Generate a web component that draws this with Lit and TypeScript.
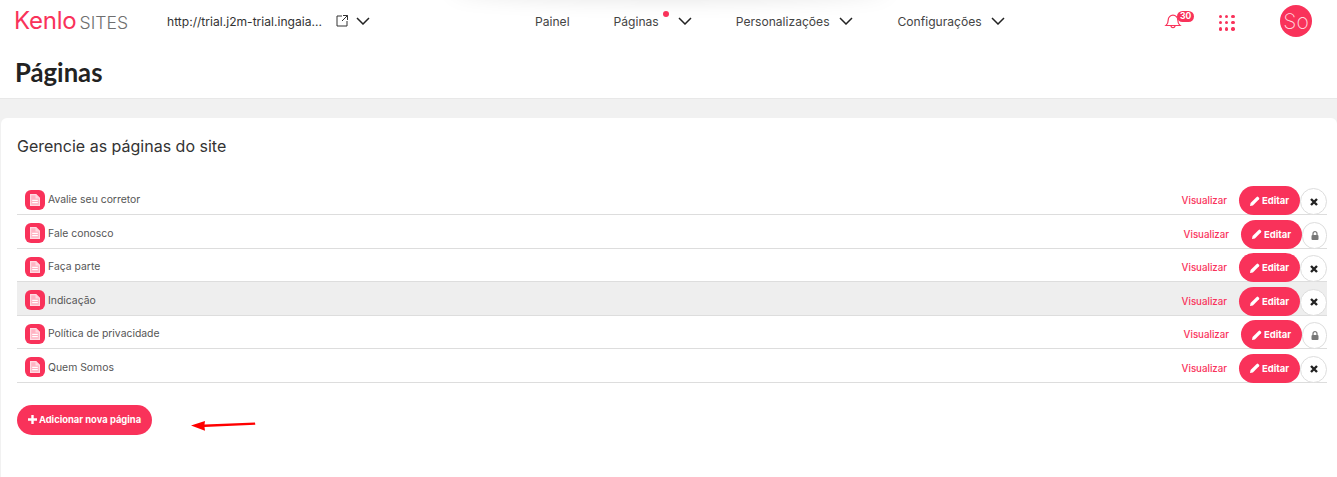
import { LitElement, html, css } from "lit";
import { customElement } from "lit/decorators.js";

const chevron = html`<svg class="chev" width="14" height="8" viewBox="0 0 14 8"><path d="M1 1l6 6 6-6" fill="none" stroke="#222" stroke-width="1.5"/></svg>`;
const docIcon = html`<svg width="10" height="12" viewBox="0 0 10 12"><path d="M.6.6h5.400l3.400 3.400v7.400h-8.800z" fill="#ffb3c3" stroke="#ffdbe2" stroke-width="1.200"/><path d="M5.500 1v3.500h3.500z" fill="#ffdbe2"/><rect x="2.200" y="5.800" width="5.600" height="1.200" fill="#fff"/><rect x="2.200" y="8" width="5.600" height="1.200" fill="#fff"/></svg>`;
const pencil = html`<svg width="10" height="10" viewBox="0 0 9 9"><path d="M0 9l.5-2.6L6 .9a1 1 0 0 1 1.400 0l.7.700a1 1 0 0 1 0 1.400L2.600 8.500z" fill="#fff"/></svg>`;
const cross = html`<svg width="8" height="8" viewBox="0 0 8 8"><path d="M1 1l6 6M7 1l-6 6" stroke="#222" stroke-width="2.400" fill="none"/></svg>`;
const lock = html`<svg width="8" height="9" viewBox="0 0 8 9"><path d="M2 4V2.700a2 2 0 0 1 4 0V4" fill="none" stroke="#777" stroke-width="1.200"/><rect x="0.500" y="4" width="7" height="5" rx="1" fill="#777"/></svg>`;

const pages: [string, boolean, boolean][] = [
  ["Avalie seu corretor", false, false],
  ["Fale conosco", true, false],
  ["Faça parte", false, false],
  ["Indicação", false, true],
  ["Política de privacidade", true, false],
  ["Quem Somos", false, false],
];

@customElement("app-root")
export class AppRoot extends LitElement {
  static styles = css`
    :host { display: block; position: relative; width: 1337px; height: 477px; overflow: hidden; background: #f1f1f1; font-family: Inter, "Liberation Sans", sans-serif; color: #333; }
    .header { background: #fff; height: 99px; box-sizing: border-box; border-bottom: 1px solid #e8e8e8; }
    .glow { position: absolute; left: 450px; top: -22px; width: 440px; height: 20px; box-shadow: 0 0 22px rgba(0,0,0,.13); border-radius: 50%; }
    .top { height: 42px; display: flex; align-items: center; position: relative; }
    .logo { width: 167px; padding-left: 14px; box-sizing: border-box; display: flex; align-items: baseline; white-space: nowrap; }
    .kenlo { color: #f9325a; font-size: 24px; font-weight: 400; letter-spacing: -.2px; line-height: 24px; }
    .sites { color: #6f6f6f; font-size: 17.600px; font-weight: 300; margin-left: 3px; }
    .url { font-size: 12.100px; color: #333; width: 169px; white-space: nowrap; }
    .urlchev { margin-left: 8px; display: flex; }
    .nav { display: flex; align-items: center; font-size: 12.100px; color: #444; margin-left: 165px; }
    .nav span { white-space: nowrap; }
    .item { display: flex; align-items: center; position: relative; }
    .item .chev { margin-left: 9px; }
    .item .far { margin-left: 19px; }
    .gap1 { margin-left: 44px; }
    .gap2 { margin-left: 45px; }
    .dot { position: absolute; width: 6px; height: 6px; background: #f9325a; border-radius: 50%; left: 49px; top: -3px; }
    .right { position: absolute; top: 0; left: 0; width: 100%; height: 44px; pointer-events: none; }
    .bell { position: absolute; left: 1164px; top: 13px; }
    .badge { position: absolute; left: 1177px; top: 11px; background: #f9325a; color: #fff; font-size: 8.500px; font-weight: 700; border-radius: 6px; width: 17px; height: 11px; line-height: 11px; text-align: center; }
    .grid { position: absolute; left: 1219px; top: 15px; display: grid; grid-template-columns: repeat(3, 3.400px); gap: 2.700px; }
    .grid i { width: 3.400px; height: 3.400px; background: #f9325a; border-radius: 50%; display: block; }
    .avatar { position: absolute; left: 1280px; top: 5px; width: 32px; height: 32px; border-radius: 50%; background: #f9325a; color: #ffd5dd; font-size: 21px; font-weight: 200; display: flex; align-items: center; justify-content: center; }
    h1 { margin: 0; padding: 14px 0 0 15px; font: 700 25.700px/32px Lato, sans-serif; color: #222; }
    .card { background: #fff; margin: 19px 0 0 1px; border-radius: 6px 6px 0 0; padding: 16px 10px 0 16px; height: 359px; box-sizing: border-box; }
    h2 { margin: 0; font: 400 16px/24px Inter, sans-serif; color: #333; }
    .rows { margin-top: 23.800px; }
    .row { display: flex; align-items: center; height: 33.500px; border-bottom: 1px solid #ddd; padding: 3px 0 0 8px; box-sizing: border-box; font-size: 10.400px; color: #555; }
    .row.hl { background: #eee; }
    .ico { width: 20px; height: 20px; border-radius: 6px; background: #f9325a; display: flex; align-items: center; justify-content: center; margin-right: 3px; }
    .name { flex: 1; }
    .vis { color: #f9325a; font-size: 9.700px; font-weight: 500; margin-right: 12px; position: relative; top: 1px; }
    .edit { width: 61px; height: 29px; border-radius: 15px; background: #f9325a; color: #fff; font-size: 9.500px; font-weight: 700; display: flex; align-items: center; justify-content: center; gap: 2px; position: relative; top: 1px; }
    .x { height: 27px; border: 1px solid #ddd; background: #fff; border-radius: 50%; box-sizing: border-box; display: flex; align-items: center; justify-content: center; position: relative; top: 2px; width: 27px; }
    .x.l { width: 25px; border-radius: 13px; }
    .add { margin-top: 22.200px; width: 135px; height: 30px; border-radius: 15px; background: #f9325a; color: #fff; font-size: 9.400px; font-weight: 700; display: flex; align-items: center; justify-content: center; gap: 2px; white-space: nowrap; }
    .arrow { position: absolute; left: 190px; top: 418.500px; }
  `;

  render() {
    return html`
      <div class="header">
        <div class="glow"></div>
        <div class="top">
          <div class="logo"><span class="kenlo">Kenlo</span><span class="sites">SITES</span></div>
          <span class="url">http://trial.j2m-trial.ingaia...</span>
          <svg width="12" height="12" viewBox="0 0 12 12"><path d="M6 1H1v10h10V6M7 .5h4.500V5M11.500 .5L6 6" fill="none" stroke="#333"/></svg>
          <span class="urlchev">${chevron}</span>
          <div class="nav">
            <div class="item"><span>Painel</span></div>
            <div class="item gap1"><span>Páginas</span><i class="dot"></i><svg class="chev far" width="14" height="8" viewBox="0 0 14 8"><path d="M1 1l6 6 6-6" fill="none" stroke="#222" stroke-width="1.500"/></svg></div>
            <div class="item gap1"><span>Personalizações</span>${chevron}</div>
            <div class="item gap2"><span>Configurações</span>${chevron}</div>
          </div>
          <div class="right">
            <svg class="bell" width="18" height="17" viewBox="0 0 18 17"><path d="M2 12.500c1.800-1.500 2.200-2.500 2.200-5.500a4.800 4.800 0 0 1 9.600 0c0 3 .4 4 2.200 5.500zM7 12.500c0 2.800 4 2.800 4 0" fill="#fff" stroke="#f9325a" stroke-width="1.200"/></svg>
            <span class="badge">30</span>
            <div class="grid">${Array.from({ length: 9 }, () => html`<i></i>`)}</div>
            <div class="avatar">So</div>
          </div>
        </div>
        <h1>Páginas</h1>
      </div>
      <div class="card">
        <h2>Gerencie as páginas do site</h2>
        <div class="rows">
          ${pages.map(
            ([n, locked, hl]) => html`
              <div class="row ${hl ? "hl" : ""}">
                <span class="ico">${docIcon}</span>
                <span class="name">${n}</span>
                <span class="vis">Visualizar</span>
                <span class="edit">${pencil} Editar</span>
                <span class="x ${locked ? "l" : ""}">${locked ? lock : cross}</span>
              </div>
            `
          )}
        </div>
        <div class="add"><svg width="9" height="9" viewBox="0 0 9 9"><path d="M4.500 0v9M0 4.500h9" stroke="#fff" stroke-width="2.400"/></svg> Adicionar nova página</div>
      </div>
      <svg class="arrow" width="68" height="14" viewBox="0 0 68 14"><path d="M1 6.500l14-4.500-.5 3.400 50.500-1.900.3 2.200-50.800 2.400.5 3.600z" fill="#f00"/></svg>
    `;
  }
}
